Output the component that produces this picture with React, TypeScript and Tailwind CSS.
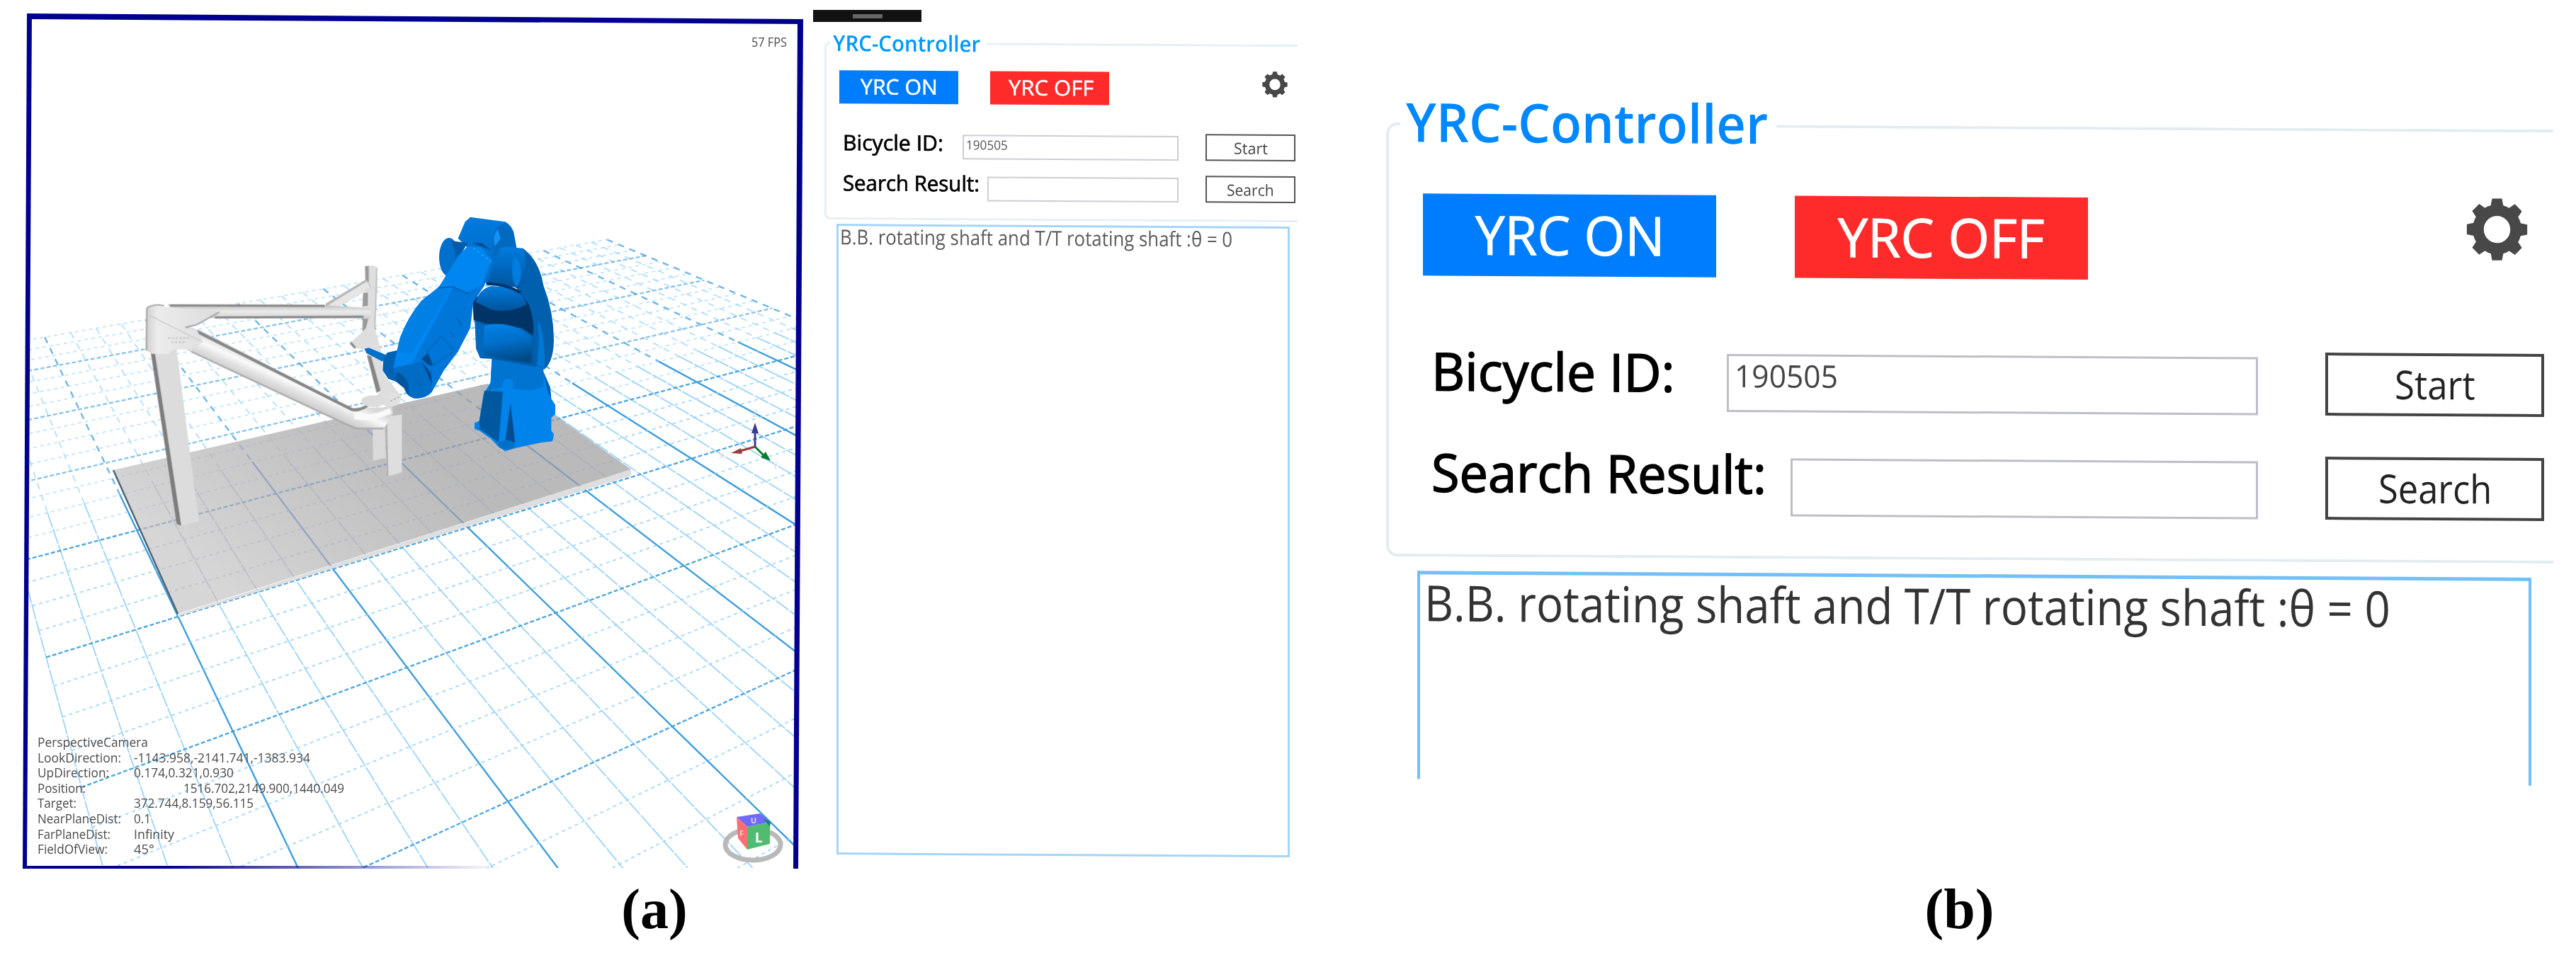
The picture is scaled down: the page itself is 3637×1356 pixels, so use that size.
import React, { useLayoutEffect, useRef, useState } from 'react';
import clsx from 'clsx';

type Point = [number, number];

// Perspective of the ground plane: one unit is a major grid cell
const project = (u: number, v: number): Point => {
  const s = u / 2;
  const t = v / 2;
  const w = 0.1476 * s - 0.2843 * t + 1;
  return [(506.5 * s + 61.3 * t + 251.5) / w, (-16 * s + 30.8 * t + 871) / w];
};

const range = (from: number, to: number) =>
  Array.from({ length: Math.round((to - from) * 4) + 1 }, (_, i) => from + i / 4);

const line = (a: Point, b: Point) =>
  `M${a[0].toFixed(1)} ${a[1].toFixed(1)}L${b[0].toFixed(1)} ${b[1].toFixed(1)}`;

const U_MIN = -0.75;
const U_MAX = 7;
const V_MIN = -4.75;
const V_MAX = 3;

const deepLines = range(U_MIN, U_MAX).map((u) => ({
  major: Number.isInteger(u),
  near: line(project(u, -1.5), project(u, V_MAX)),
  far: line(project(u, V_MIN), project(u, -1.5)),
}));

const crossLines = range(V_MIN, V_MAX).map((v) => ({
  major: Number.isInteger(v),
  far: v < -1,
  d: line(project(U_MIN, v), project(U_MAX, v)),
}));

const cameraInfo = [
  { label: 'PerspectiveCamera', width: 156 },
  { label: 'LookDirection:', width: 118, value: '-1143.958,-2141.741,-1383.934', valueWidth: 249 },
  { label: 'UpDirection:', width: 101, value: '0.174,0.321,0.930', valueWidth: 141 },
  { label: 'Position:', width: 68, value: '1516.702,2149.900,1440.049', valueWidth: 227, indent: true },
  { label: 'Target:', width: 55, value: '372.744,8.159,56.115', valueWidth: 169 },
  { label: 'NearPlaneDist:', width: 118, value: '0.1', valueWidth: 24 },
  { label: 'FarPlaneDist:', width: 103, value: 'Infinity', valueWidth: 57 },
  { label: 'FieldOfView:', width: 99, value: '45°', valueWidth: 29 },
];

const panelSizes = {
  small: {
    fieldset: 'w-[668px] h-[266px] border-[3px] border-[#e6eff3] rounded-l-lg',
    legend: 'ml-[5px] pl-[4px] pr-[8px] text-[31px] leading-[32px] text-[#0099fa]',
    topRow: 'pl-[18px] pt-[23px] gap-[45px]',
    power: 'h-[47px] w-[168px] text-[30px] pb-[1px] [-webkit-text-stroke:0.5px_white]',
    gear: 'ml-auto mr-[14px] -mt-[2px] h-[37px] w-[36px]',
    rows: 'mt-[41px] gap-[22px] pl-[23px]',
    row: 'h-[37px] w-[639px]',
    labelOne: '-mt-[1px] mr-[27px] text-[30px] [-webkit-text-stroke:0.7px_black]',
    labelTwo: '-mt-[3px] mr-[11px] text-[30px] [-webkit-text-stroke:0.7px_black]',
    input: 'h-[35px] mr-[38px] pl-[3px] pt-[3px] border-2 border-[#ccced4] text-[18px] text-[#555]',
    button: 'h-[38px] w-[127px] border-2 border-[#555] text-[22px] text-[#444]',
    list: 'mt-[6px] ml-[17px] h-[891px] w-[640px] border-[3px] border-[#a5d5f8] pl-[2px] text-[29px] text-[#5a5a5a]',
    widths: { title: 208, on: 109, off: 120, id: 142, result: 193, value: 59, start: 48, search: 67, log: 554 },
  },
  large: {
    fieldset: 'w-[1648px] h-[655px] border-[4px] border-[#e2ecf1] rounded-l-2xl',
    legend: 'ml-[16px] pl-[8px] pr-[12px] pb-2 text-[76px] leading-[80px] text-[#0088ff]',
    topRow: 'pl-[48px] pt-[54px] gap-[111px]',
    power: 'h-[116px] w-[414px] text-[76px] pb-[2px] [-webkit-text-stroke:1px_white]',
    gear: 'ml-auto mr-[36px] -mt-[3px] h-[89px] w-[87px]',
    rows: 'mt-[101px] gap-[58px] pl-[60px]',
    row: 'h-[89px] w-[1571px]',
    labelOne: '-mt-[4px] mr-[73px] text-[74px] [-webkit-text-stroke:1.6px_black]',
    labelTwo: '-mt-[8px] mr-[34px] text-[74px] [-webkit-text-stroke:1.6px_black]',
    input: 'h-[82px] mr-[95px] pl-[8px] pt-[5px] border-[3px] border-[#bcbfc6] text-[44px] text-[#444]',
    button: 'h-[89px] w-[309px] border-[4px] border-[#444] pb-1 text-[56px] text-[#222]',
    list: 'mt-[20px] ml-[44px] h-[294px] w-[1573px] border-x-[4px] border-t-[5px] border-[#74bff5] pt-[4px] pl-[6px] text-[70px] text-[#333]',
    widths: { title: 511, on: 267, off: 292, id: 344, result: 473, value: 146, start: 114, search: 160, log: 1364 },
  },
};

interface FitProps {
  width: number;
  className?: string;
  children: React.ReactNode;
}

// Single line of text condensed or widened to an exact width
function Fit({ width, className, children }: FitProps) {
  const ref = useRef<HTMLSpanElement>(null);
  const [scale, setScale] = useState(1);

  useLayoutEffect(() => {
    if (ref.current) setScale(width / ref.current.offsetWidth);
  }, [width, children]);

  return (
    <span className={clsx('block shrink-0', className)} style={{ width }}>
      <span
        ref={ref}
        className="inline-block origin-left whitespace-pre"
        style={{ transform: `scaleX(${scale})` }}
      >
        {children}
      </span>
    </span>
  );
}

function Gear({ className }: { className: string }) {
  return (
    <svg viewBox="-50 -50 100 100" preserveAspectRatio="none" className={className}>
      {[0, 45, 90, 135, 180, 225, 270, 315].map((angle) => (
        <path key={angle} d="M-11 -34L-8 -49H8L11 -34Z" fill="#484848" transform={`rotate(${angle})`} />
      ))}
      <circle r="30.5" fill="none" stroke="#484848" strokeWidth="18" />
    </svg>
  );
}

function ControllerPanel({ size }: { size: 'small' | 'large' }) {
  const s = panelSizes[size];
  const w = s.widths;

  return (
    <div className="origin-top-left skew-y-[0.35deg]">
      <fieldset className={clsx('border-r-0', s.fieldset)}>
        <legend className={clsx('font-semibold', s.legend)}>
          <Fit width={w.title}>YRC-Controller</Fit>
        </legend>

        <div className={clsx('flex items-start leading-none text-white', s.topRow)}>
          <button className={clsx('flex items-center justify-center bg-[#007dfc]', s.power)}>
            <Fit width={w.on}>YRC ON</Fit>
          </button>
          <button className={clsx('flex items-center justify-center bg-[#ff2b2b] font-medium', s.power)}>
            <Fit width={w.off}>YRC OFF</Fit>
          </button>
          <Gear className={s.gear} />
        </div>

        <div className={clsx('flex flex-col leading-none text-black', s.rows)}>
          <div className={clsx('flex items-end', s.row)}>
            <Fit width={w.id} className={clsx('self-start', s.labelOne)}>Bicycle ID:</Fit>
            <div className={clsx('flex-1', s.input)}>
              <Fit width={w.value}>190505</Fit>
            </div>
            <button className={clsx('flex items-center justify-center', s.button)}>
              <Fit width={w.start}>Start</Fit>
            </button>
          </div>
          <div className={clsx('flex items-end', s.row)}>
            <Fit width={w.result} className={clsx('self-start', s.labelTwo)}>Search Result:</Fit>
            <div className={clsx('flex-1', s.input)} />
            <button className={clsx('flex items-center justify-center', s.button)}>
              <Fit width={w.search}>Search</Fit>
            </button>
          </div>
        </div>
      </fieldset>

      <div className={clsx('leading-none', s.list)}>
        <Fit width={w.log}>B.B. rotating shaft and T/T rotating shaft :θ = 0</Fit>
      </div>
    </div>
  );
}

function Grid({ minor, major }: { minor: string; major: string }) {
  return (
    <g fill="none">
      {deepLines.map((l, i) => (
        <g key={i} stroke={l.major ? major : minor} strokeWidth={l.major ? 2.4 : 1.8}>
          <path d={l.near} strokeDasharray={l.major ? undefined : '22 2'} />
          <path d={l.far} strokeDasharray="9 8" opacity=".75" />
        </g>
      ))}
      {crossLines.map((l, i) => (
        <path
          key={i}
          d={l.d}
          stroke={l.major ? major : minor}
          strokeWidth={l.major ? 2.4 : 1.8}
          strokeDasharray={l.major ? '6 3' : '5 5'}
          opacity={l.far ? 0.6 : 0.9}
        />
      ))}
    </g>
  );
}

function BikeFrame() {
  return (
    <g transform="translate(150 350) scale(.33333)">
      {/* Front post */}
      <path d="M188 440L215 440L318 1178L298 1170Z" fill="#7d7d7d" />
      <path d="M205 440L298 430L392 1158L318 1180Z" fill="#dcdcdc" />
      {/* Rear posts */}
      <path d="M1128 760H1180L1185 890L1130 902Z" fill="#dadada" />
      <path d="M1186 715L1252 706V952L1192 968Z" fill="#dedede" />
      <path d="M1186 715L1192 968" stroke="#aaa" strokeWidth="5" />
      {/* Seat tube and rear triangle */}
      <path d="M1096 78Q1120 70 1146 80L1148 160L1138 340L1165 440L1180 540L1250 630L1240 660L1200 680L1130 640L1160 610L1105 450L1090 430L1055 425L1032 405L1085 355L1098 300Z" fill="#dedede" />
      <path d="M1096 78H1112V145L1098 140Z M1088 190H1108V245L1085 250Z M1086 300L1110 300L1100 340L1085 355Z" fill="#9a9a9a" />
      <path d="M1104 455L1122 460L1162 605L1145 615Z" fill="#858585" />
      <path d="M1146 85L1138 340" stroke="#bbb" strokeWidth="5" />
      <path d="M1112 150L938 255" stroke="#b5b5b5" strokeWidth="40" />
      <path d="M1112 155L945 257" stroke="#e6e6e6" strokeWidth="30" />
      <path d="M1035 402L1055 425" stroke="#888" strokeWidth="10" />
      {/* Top tube */}
      <path d="M260 240L900 242L1120 255V300L440 298L300 290Z" fill="url(#topTube)" />
      <path d="M270 244L925 246M460 295L1090 292" stroke="#858585" strokeWidth="9" />
      {/* Down tube */}
      <path d="M330 330L400 350L1040 680L1210 675L1215 700L1180 760L1060 765L1010 745L340 432L290 420Z" fill="url(#downTube)" />
      <path d="M385 355L1040 685Q1080 695 1130 650" fill="none" stroke="#868686" strokeWidth="13" />
      <path d="M360 440L1010 745L1060 766H1175" fill="none" stroke="#aaa" strokeWidth="7" />
      <path d="M1050 715Q1120 730 1205 690" fill="none" stroke="#fafafa" strokeWidth="24" />
      <ellipse cx="1130" cy="650" rx="50" ry="25" fill="#dcdcdc" />
      <circle cx="1222" cy="642" r="26" fill="#e2e2e2" />
      <path d="M1204 650L1240 632" stroke="#b0b0b0" strokeWidth="6" strokeDasharray="8 8" />
      {/* Head tube */}
      <path d="M172 250Q205 232 250 250L480 270L390 320L330 340L385 350L410 400L360 432L290 430L262 450L195 450L168 435Z" fill="url(#head)" />
      <path d="M480 272L385 325L335 338" fill="none" stroke="#9e9e9e" strokeWidth="6" />
      <path d="M180 285L400 395" fill="none" stroke="#c9c9c9" strokeWidth="4" />
      <path d="M172 255L170 435" stroke="#a9a9a9" strokeWidth="7" />
      <path d="M172 255Q200 235 245 245" fill="none" stroke="#aaa" strokeWidth="6" />
      <path d="M262 382H350M275 400H340" stroke="#c4c4c4" strokeWidth="6" strokeDasharray="9 7" />
    </g>
  );
}

function Robot() {
  return (
    <g transform="translate(480 280) scale(.33333)">
      {/* Base */}
      <path d="M645 650L820 660L862 735L890 800L895 850L912 875V915L895 930V985L906 1000L900 1030L850 1036L745 1058L700 1072L668 1050L640 1020L590 985L570 978V952L590 944L608 830L638 780Z" fill="#0083ea" />
      <path d="M645 650L862 700L862 800L800 815L690 800L625 815L638 780Z" fill="#0074d0" />
      <path d="M612 815L690 820L672 1035L590 975V944Z" fill="#0058a0" />
      <path d="M722 870L742 1036L700 1028Z" fill="#004d90" />
      <circle cx="712" cy="788" r="24" fill="#0084ea" />
      <ellipse cx="705" cy="1045" rx="35" ry="20" fill="#0070c8" />
      <path d="M862 740L890 800L895 850L880 820Z" fill="#0060b0" />
      {/* Shoulder and lower link */}
      <path d="M570 500L830 500L830 715L640 680L595 678L578 640Z" fill="#005ca8" />
      <path d="M562 430L640 380L770 395L832 500V590L770 550L620 532L566 515Z" fill="#003467" />
      <path d="M575 440Q590 385 640 372L720 378Q775 400 790 450Q720 490 640 472Z" fill="url(#joint)" />
      <path d="M612 540Q640 528 700 535Q780 550 812 590V700L640 672Q606 660 606 620Z" fill="url(#drum)" />
      <path d="M572 520L612 540L606 640L620 672L592 674L576 635Z" fill="#0069bd" />
      <path d="M740 210L775 212Q845 265 862 370Q905 480 906 600Q905 690 866 725L830 708L815 590Q830 540 800 450L740 370Z" fill="#0060ae" />
      <path d="M842 520Q872 600 866 725L835 706Q846 600 838 540Z" fill="#0077d4" />
      {/* Elbow */}
      <path d="M500 170L530 100L552 80L700 100Q732 115 738 160L748 212L775 215L730 380L620 365L560 230Z" fill="url(#elbow)" />
      <path d="M660 130Q640 180 650 250L700 210L748 212L735 140L700 102Z" fill="#0069c0" />
      <path d="M668 130Q645 160 655 205L680 170Z" fill="#1590f4" />
      <path d="M680 210Q740 200 780 220Q800 300 760 385Q700 360 622 362L650 290Z" fill="url(#joint)" />
      <path d="M735 250Q765 250 768 320Q762 370 745 375Q720 330 735 250Z" fill="#007ee0" />
      <path d="M622 362Q700 362 765 400" fill="none" stroke="#003467" strokeWidth="12" />
      <path d="M560 190L640 220L600 190Z" fill="#004c90" />
      <ellipse cx="462" cy="250" rx="42" ry="82" fill="#0070cc" />
      <path d="M470 180L540 190L500 260L440 340Q490 290 490 230Z" fill="#005cab" />
      {/* Forearm */}
      <path d="M540 205L600 208L645 260L612 370L565 440L552 550L500 650L440 730L390 820Q365 850 320 848Q285 845 272 805L235 775L205 765L182 730L184 680L200 655L242 645L255 590Q290 500 345 435L420 375L445 335L500 245Z" fill="#0077d8" />
      <path d="M540 205L600 208L640 262L600 370L530 400L480 375L380 560L305 700L225 720L242 645L255 590Q290 500 345 435L420 375L445 335L500 245Z" fill="#0086f0" />
      <path d="M345 435L420 378L470 385L300 660L242 650L255 590Q290 500 345 435Z" fill="#007fe4" />
      <path d="M182 730L184 680L200 655L242 645L225 720L245 780L205 765Z" fill="#0062b4" />
      <path d="M225 720L305 705L345 690L385 740L390 820Q365 850 320 848Q285 845 272 805Z" fill="#006cc6" />
      <path d="M240 735Q300 760 290 835L272 805L235 775Z" fill="#00559c" />
      <path d="M345 680L375 655L392 710L372 705Z M345 690L385 740L390 790L360 720Z" fill="#004888" />
      <path d="M365 655L430 585M375 660L395 708L480 650M430 585L482 645" fill="none" stroke="#0066ba" strokeWidth="5" />
      <path d="M415 380L480 375L545 405M470 565L485 590M495 505L515 540M320 770L345 795" fill="none" stroke="#005fae" strokeWidth="5" />
      <path d="M565 210L640 270" stroke="#22a0f8" strokeWidth="5" strokeDasharray="10 12" />
      {/* Tool */}
      <path d="M104 638L122 634L195 664L180 692L112 656Z" fill="#0070cc" />
    </g>
  );
}

function Scene() {
  return (
    <svg viewBox="0 0 1148 1232" className="h-[1232px] w-[1148px] shrink-0">
      <defs>
        <clipPath id="view">
          <path d="M42 24L1130 31L1124 1226H36Z" />
        </clipPath>
        <clipPath id="plate">
          <path d="M160 664L688 542L760 570L891 663L251 866Z" />
        </clipPath>
        <linearGradient id="floor" gradientUnits="userSpaceOnUse" x1="560" y1="600" x2="350" y2="860">
          <stop offset="0" stopColor="#bababa" />
          <stop offset="1" stopColor="#d6d6d6" />
        </linearGradient>
        <linearGradient id="topTube" x1="0" y1="0" x2="0" y2="1">
          <stop offset="0" stopColor="#bcbcbc" />
          <stop offset=".5" stopColor="#ececec" />
          <stop offset="1" stopColor="#cfcfcf" />
        </linearGradient>
        <linearGradient id="downTube" gradientUnits="userSpaceOnUse" x1="740" y1="510" x2="695" y2="610">
          <stop offset="0" stopColor="#d8d8d8" />
          <stop offset=".35" stopColor="#fafafa" />
          <stop offset=".6" stopColor="#e2e2e2" />
          <stop offset="1" stopColor="#c6c6c6" />
        </linearGradient>
        <linearGradient id="head">
          <stop offset="0" stopColor="#cfcfcf" />
          <stop offset=".15" stopColor="#ececec" />
          <stop offset="1" stopColor="#dcdcdc" />
        </linearGradient>
        <linearGradient id="joint" x1="0" y1="0" x2="0" y2="1">
          <stop offset="0" stopColor="#007cdf" />
          <stop offset="1" stopColor="#00529a" />
        </linearGradient>
        <linearGradient id="drum" x1="0" y1="0" x2=".2" y2="1">
          <stop offset="0" stopColor="#0083ea" />
          <stop offset=".5" stopColor="#006fc9" />
          <stop offset="1" stopColor="#004a88" />
        </linearGradient>
        <linearGradient id="elbow" x1="0" y1="0" x2="0" y2="1">
          <stop offset="0" stopColor="#007ade" />
          <stop offset="1" stopColor="#0068be" />
        </linearGradient>
        <linearGradient id="fade">
          <stop offset=".3" stopColor="#00008f" />
          <stop offset="1" stopColor="#00008f" stopOpacity="0" />
        </linearGradient>
      </defs>

      <g clipPath="url(#view)">
        <Grid minor="#9bd3fa" major="#3e9edc" />
        <path d="M251 868L891 663V672L251 871Z" fill="#dedede" />
        <path d="M160 664L688 542L760 570L891 663L251 867Z" fill="url(#floor)" />
        <g clipPath="url(#plate)" opacity=".4">
          <Grid minor="#98a4bf" major="#4274b4" />
        </g>
        <path d="M160 664L251 867" stroke="#4f6478" strokeWidth="2.5" />
        <BikeFrame />
        <Robot />

        {/* Axis gizmo */}
        <g strokeWidth="3">
          <path d="M1066 631V606" stroke="#3b3b8e" />
          <path d="M1066 631L1045 637" stroke="#9b3a3a" />
          <path d="M1066 631L1078 643" stroke="#0c7a2c" />
        </g>
        <path d="M1066 597L1071 612H1061Z" fill="#3b3b8e" />
        <path d="M1032 640L1046 633L1048 641Z" fill="#9b3a3a" />
        <path d="M1088 651L1074 646L1081 638Z" fill="#0c7a2c" />
        <g fontSize="14" fill="#dedede" textAnchor="middle">
          <text x="1066" y="589">Z</text>
          <text x="1019" y="649">X</text>
          <text x="1095" y="662">Y</text>
        </g>

        {/* View cube */}
        <ellipse cx="1063" cy="1193" rx="39" ry="22" fill="none" stroke="#b9b9b9" strokeWidth="7" />
        <path d="M1040 1154L1073 1149L1088 1161L1055 1168Z" fill="#7269fb" />
        <path d="M1040 1154L1055 1168V1200L1042 1184Z" fill="#fb6f74" />
        <path d="M1055 1168L1087 1161V1192L1055 1200Z" fill="#4fbc72" />
        <path d="M1078 1156L1088 1161L1087 1168Z" fill="#0b8a70" />
        <g fill="#fff" textAnchor="middle" fontWeight="700">
          <text x="1071" y="1190" fontSize="19">L</text>
          <text x="1047" y="1181" fontSize="11" opacity=".6">F</text>
          <text x="1064" y="1163" fontSize="11" opacity=".7">U</text>
        </g>
      </g>

      {/* Camera readout */}
      <g fontSize="19" fill="#4a4a4a">
        {cameraInfo.map((row, i) => (
          <g key={row.label}>
            <text x="53" y={1055 + i * 21.6} textLength={row.width} lengthAdjust="spacingAndGlyphs">
              {row.label}
            </text>
            {row.value && (
              <text
                x={row.indent ? 259 : 189}
                y={1055 + i * 21.6}
                textLength={row.valueWidth}
                lengthAdjust="spacingAndGlyphs"
              >
                {row.value}
              </text>
            )}
          </g>
        ))}
        <text x="1061" y="66" textLength="50" lengthAdjust="spacingAndGlyphs">57 FPS</text>
      </g>

      {/* Viewport border */}
      <path d="M38 19L1134 27V34L38 27Z" fill="#00008f" />
      <path d="M38 19H45L38 1227H32Z" fill="#00008f" />
      <path d="M1126 28H1134L1127 1227H1120Z" fill="#00008f" />
      <path d="M32 1223H710V1227H32Z" fill="url(#fade)" />
    </svg>
  );
}

export default function App() {
  return (
    <main className="flex h-[1356px] w-[3637px] overflow-hidden bg-white font-['Open_Sans','Noto_Sans',sans-serif]">
      <figure className="flex w-[1832px] shrink-0 flex-col">
        <div className="flex h-[1232px]">
          <Scene />
          <div className="pt-[14px]">
            <div className="flex h-[17px] w-[153px] items-center justify-center bg-[#111]">
              <div className="h-[6px] w-[42px] bg-[#666]" />
            </div>
            <div className="mt-[13px] ml-4">
              <ControllerPanel size="small" />
            </div>
          </div>
        </div>
        <figcaption className="mt-[12px] pl-4 text-center font-['Liberation_Serif',serif] text-[80px] leading-none font-bold">
          (a)
        </figcaption>
      </figure>

      <figure className="flex flex-1 flex-col">
        <div className="h-[1232px] pt-[131px] pl-[125px]">
          <ControllerPanel size="large" />
        </div>
        <figcaption className="mt-[12px] pl-16 text-center font-['Liberation_Serif',serif] text-[80px] leading-none font-bold">
          (b)
        </figcaption>
      </figure>
    </main>
  );
}
